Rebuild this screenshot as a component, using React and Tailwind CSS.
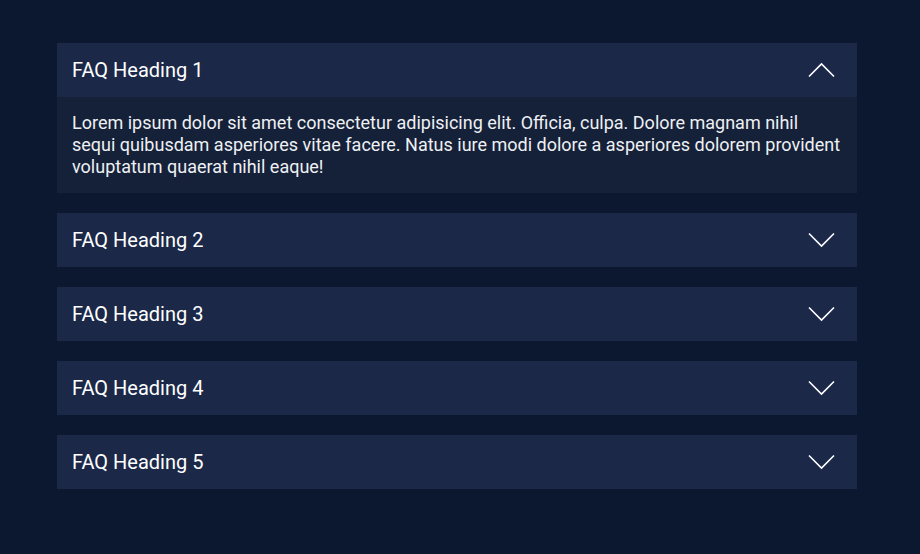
import { useState } from "react";

const faqs = [
  {
    q: "FAQ Heading 1",
    a: "Lorem ipsum dolor sit amet consectetur adipisicing elit. Officia, culpa. Dolore magnam nihil sequi quibusdam asperiores vitae facere. Natus iure modi dolore a asperiores dolorem provident voluptatum quaerat nihil eaque!",
  },
  { q: "FAQ Heading 2", a: "Lorem ipsum dolor sit amet consectetur adipisicing elit." },
  { q: "FAQ Heading 3", a: "Lorem ipsum dolor sit amet consectetur adipisicing elit." },
  { q: "FAQ Heading 4", a: "Lorem ipsum dolor sit amet consectetur adipisicing elit." },
  { q: "FAQ Heading 5", a: "Lorem ipsum dolor sit amet consectetur adipisicing elit." },
];

const Chevron = ({ up }) => (
  <svg width="27" height="16" viewBox="0 0 27 16" fill="none" className="text-white">
    <path
      d={up ? "M1 14.5 L13.5 2 L26 14.5" : "M1 1.5 L13.5 14 L26 1.5"}
      stroke="currentColor"
      strokeWidth="1.6"
    />
  </svg>
);

const FaqItem = ({ item, open, onToggle }) => (
  <div className="w-full">
    <button
      type="button"
      onClick={onToggle}
      className="w-full h-[54px] flex items-center justify-between pl-[15px] pr-[22px] bg-[#1b2848] text-left"
    >
      <span className="text-[20px] text-white">{item.q}</span>
      <Chevron up={open} />
    </button>
    {open && (
      <div className="bg-[#152138] px-[15px] py-[15px] text-[18px] leading-[22px] text-[#eef0f4]">
        {item.a}
      </div>
    )}
  </div>
);

export default function App() {
  const [openIdx, setOpenIdx] = useState(0);

  return (
    <div
      className="min-h-[554px] bg-[#0c1730] pt-[43px] px-[57px]"
      style={{ fontFamily: "Roboto, sans-serif" }}
    >
      <div className="flex flex-col gap-5 w-[800px]">
        {faqs.map((item, i) => (
          <FaqItem
            key={item.q}
            item={item}
            open={openIdx === i}
            onToggle={() => setOpenIdx(openIdx === i ? -1 : i)}
          />
        ))}
      </div>
    </div>
  );
}
